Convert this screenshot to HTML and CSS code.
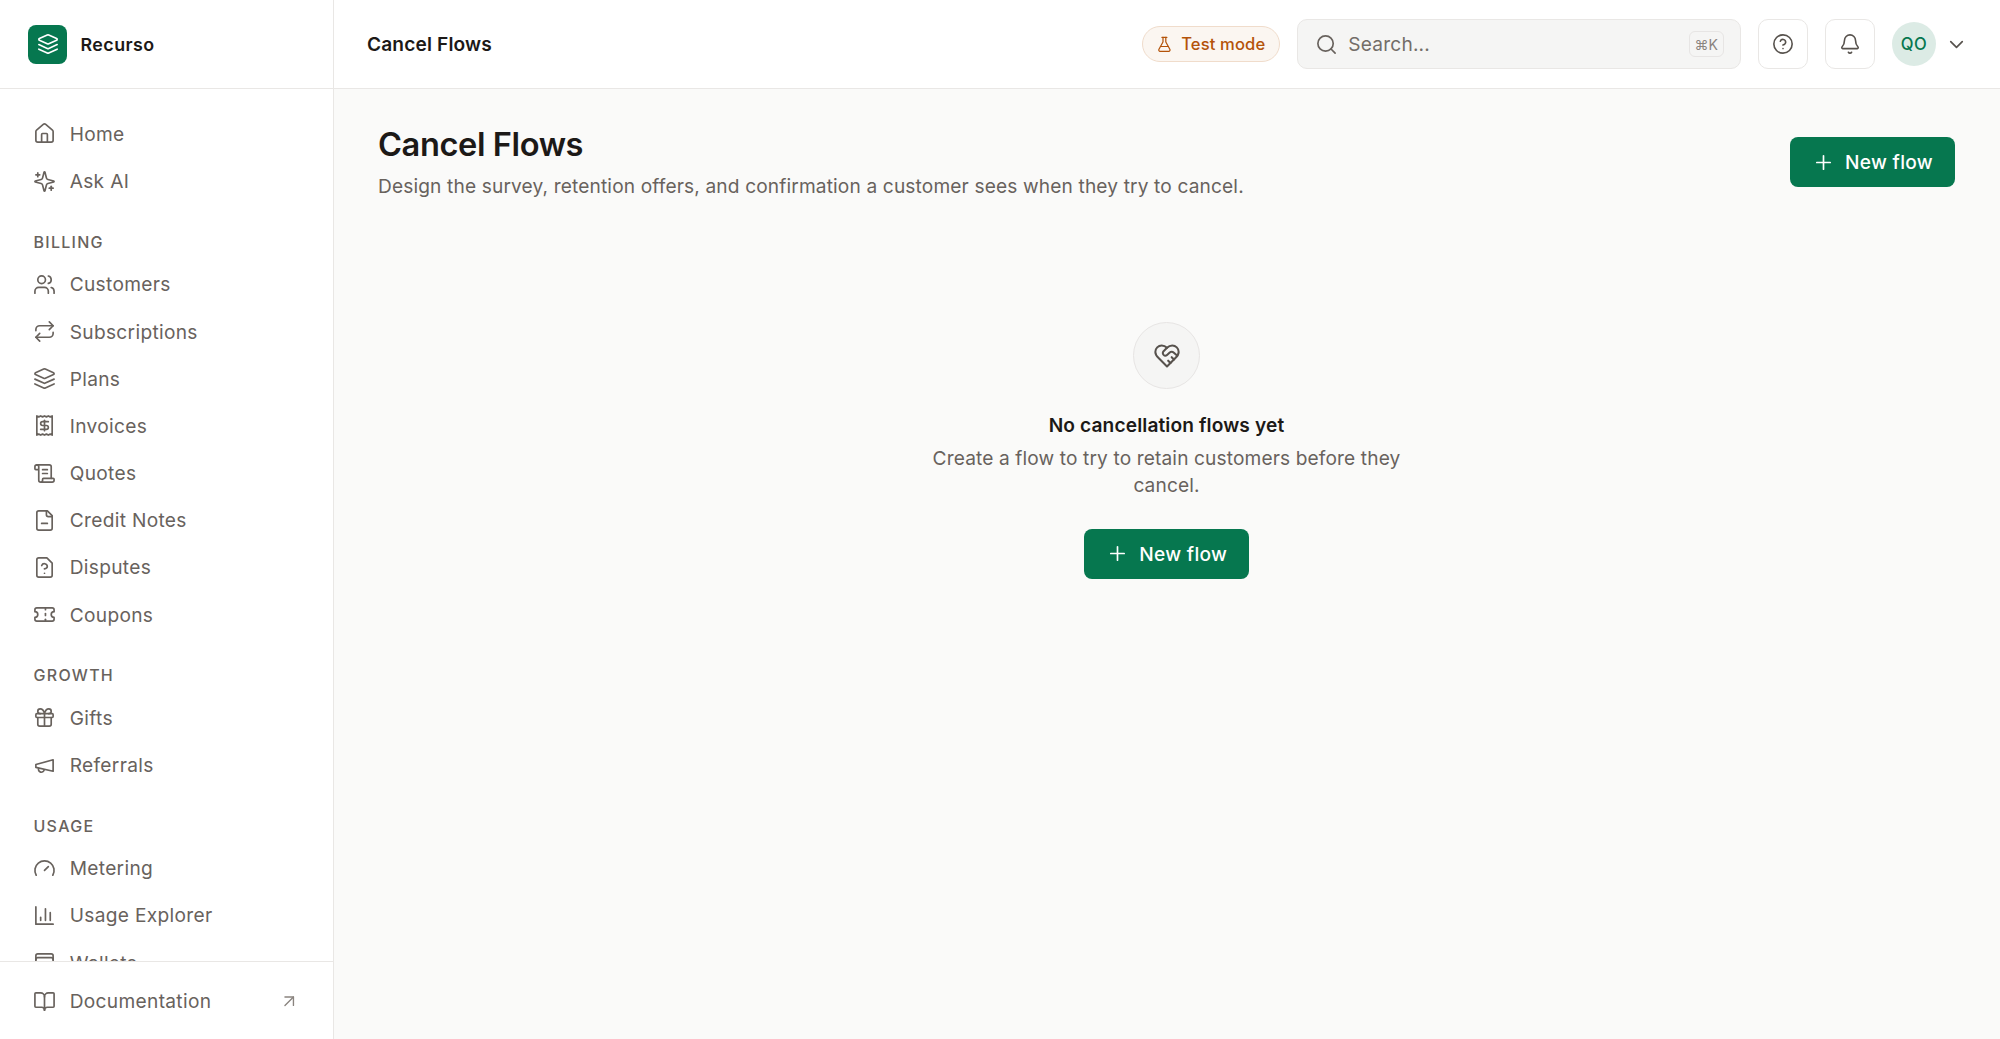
FILE: index.html
```html
<!DOCTYPE html>
<html lang="en">
<head>
<meta charset="utf-8">
<title>Cancel Flows</title>
<link rel="stylesheet" href="styles.css">
</head>
<body>
<div class="app">
  <aside class="sidebar">
    <div class="brand">
      <span class="logo"><svg class="ic logo-ic" viewBox="0 0 24 24"><path d="m12.83 2.18a2 2 0 0 0-1.66 0L2.6 6.08a1 1 0 0 0 0 1.83l8.58 3.91a2 2 0 0 0 1.66 0l8.58-3.9a1 1 0 0 0 0-1.83Z"/><path d="m22 17.65-9.17 4.16a2 2 0 0 1-1.66 0L2 17.65"/><path d="m22 12.65-9.17 4.16a2 2 0 0 1-1.66 0L2 12.65"/></svg></span>
      <span class="brand-name">Recurso</span>
    </div>
    <nav class="nav">
      <a class="item"><svg class="ic" viewBox="0 0 24 24"><path d="M15 21v-8a1 1 0 0 0-1-1h-4a1 1 0 0 0-1 1v8"/><path d="M3 10a2 2 0 0 1 .709-1.528l7-5.999a2 2 0 0 1 2.582 0l7 5.999A2 2 0 0 1 21 10v9a2 2 0 0 1-2 2H5a2 2 0 0 1-2-2z"/></svg>Home</a>
      <a class="item"><svg class="ic" viewBox="0 0 24 24"><path d="M9.937 15.5A2 2 0 0 0 8.5 14.063l-6.135-1.582a.5.5 0 0 1 0-.962L8.5 9.936A2 2 0 0 0 9.937 8.5l1.582-6.135a.5.5 0 0 1 .963 0L14.063 8.5A2 2 0 0 0 15.5 9.937l6.135 1.581a.5.5 0 0 1 0 .964L15.5 14.063a2 2 0 0 0-1.437 1.437l-1.582 6.135a.5.5 0 0 1-.963 0z"/><path d="M5 3v4"/><path d="M3 5h4"/><path d="M19 17v4"/><path d="M17 19h4"/></svg>Ask AI</a>

      <div class="label">BILLING</div>
      <a class="item"><svg class="ic" viewBox="0 0 24 24"><path d="M16 21v-2a4 4 0 0 0-4-4H6a4 4 0 0 0-4 4v2"/><circle cx="9" cy="7" r="4"/><path d="M22 21v-2a4 4 0 0 0-3-3.87"/><path d="M16 3.13a4 4 0 0 1 0 7.75"/></svg>Customers</a>
      <a class="item"><svg class="ic" viewBox="0 0 24 24"><path d="m17 2 4 4-4 4"/><path d="M3 11v-1a4 4 0 0 1 4-4h14"/><path d="m7 22-4-4 4-4"/><path d="M21 13v1a4 4 0 0 1-4 4H3"/></svg>Subscriptions</a>
      <a class="item"><svg class="ic" viewBox="0 0 24 24"><path d="m12.83 2.18a2 2 0 0 0-1.66 0L2.6 6.08a1 1 0 0 0 0 1.83l8.58 3.91a2 2 0 0 0 1.66 0l8.58-3.9a1 1 0 0 0 0-1.83Z"/><path d="m22 17.65-9.17 4.16a2 2 0 0 1-1.66 0L2 17.65"/><path d="m22 12.65-9.17 4.16a2 2 0 0 1-1.66 0L2 12.65"/></svg>Plans</a>
      <a class="item"><svg class="ic" viewBox="0 0 24 24"><path d="M4 2v20l2-1 2 1 2-1 2 1 2-1 2 1 2-1 2 1V2l-2 1-2-1-2 1-2-1-2 1-2-1-2 1Z"/><path d="M16 8h-6a2 2 0 1 0 0 4h4a2 2 0 1 1 0 4H8"/><path d="M12 17.5v-11"/></svg>Invoices</a>
      <a class="item"><svg class="ic" viewBox="0 0 24 24"><path d="M15 12h-5"/><path d="M15 8h-5"/><path d="M19 17V5a2 2 0 0 0-2-2H4"/><path d="M8 21h12a2 2 0 0 0 2-2v-1a1 1 0 0 0-1-1H11a1 1 0 0 0-1 1v1a2 2 0 1 1-4 0V5a2 2 0 1 0-4 0v2a1 1 0 0 0 1 1h3"/></svg>Quotes</a>
      <a class="item"><svg class="ic" viewBox="0 0 24 24"><path d="M15 2H6a2 2 0 0 0-2 2v16a2 2 0 0 0 2 2h12a2 2 0 0 0 2-2V7Z"/><path d="M14 2v4a2 2 0 0 0 2 2h4"/><path d="M9 15h6"/></svg>Credit Notes</a>
      <a class="item"><svg class="ic" viewBox="0 0 24 24"><path d="M14.5 2H6a2 2 0 0 0-2 2v16a2 2 0 0 0 2 2h12a2 2 0 0 0 2-2V7.5L14.5 2z"/><path d="M9.1 10a3 3 0 0 1 5.82 1c0 2-3 2.5-3 2.5"/><path d="M12 18h.01"/></svg>Disputes</a>
      <a class="item"><svg class="ic" viewBox="0 0 24 24"><path d="M2 9a3 3 0 0 1 0 6v2a2 2 0 0 0 2 2h16a2 2 0 0 0 2-2v-2a3 3 0 0 1 0-6V7a2 2 0 0 0-2-2H4a2 2 0 0 0-2 2Z"/><path d="M13 5v2"/><path d="M13 17v2"/><path d="M13 11v2"/></svg>Coupons</a>

      <div class="label">GROWTH</div>
      <a class="item"><svg class="ic" viewBox="0 0 24 24"><rect x="3" y="8" width="18" height="4" rx="1"/><path d="M12 8v13"/><path d="M19 12v7a2 2 0 0 1-2 2H7a2 2 0 0 1-2-2v-7"/><path d="M7.5 8a2.5 2.5 0 0 1 0-5A4.8 8 0 0 1 12 8a4.8 8 0 0 1 4.5-5 2.5 2.5 0 0 1 0 5"/></svg>Gifts</a>
      <a class="item"><svg class="ic" viewBox="0 0 24 24"><path d="m3 11 18-5v12L3 14v-3z"/><path d="M11.6 16.8a3 3 0 1 1-5.8-1.6"/></svg>Referrals</a>

      <div class="label">USAGE</div>
      <a class="item"><svg class="ic" viewBox="0 0 24 24"><path d="m12 14 4-4"/><path d="M3.34 19a10 10 0 1 1 17.32 0"/></svg>Metering</a>
      <a class="item"><svg class="ic" viewBox="0 0 24 24"><path d="M3 3v18h18"/><path d="M8 17v-3"/><path d="M13 17V5"/><path d="M18 17V9"/></svg>Usage Explorer</a>
      <a class="item"><svg class="ic" viewBox="0 0 24 24"><rect x="3" y="3" width="18" height="18" rx="2"/><path d="M3 9a2 2 0 0 1 2-2h14a2 2 0 0 1 2 2"/><path d="M3 11h3c.8 0 1.6.3 2.1.9l1.1.9c1.6 1.6 4.1 1.6 5.7 0l1.1-.9c.5-.5 1.3-.9 2.1-.9H21"/></svg>Wallets</a>
    </nav>
    <div class="side-foot">
      <a class="item doc"><svg class="ic" viewBox="0 0 24 24"><path d="M12 7v14"/><path d="M3 18a1 1 0 0 1-1-1V4a1 1 0 0 1 1-1h5a4 4 0 0 1 4 4 4 4 0 0 1 4-4h5a1 1 0 0 1 1 1v13a1 1 0 0 1-1 1h-6a3 3 0 0 0-3 3 3 3 0 0 0-3-3z"/></svg><span class="doc-text">Documentation</span><svg class="ic ext" viewBox="0 0 24 24"><path d="M7 7h10v10"/><path d="M7 17 17 7"/></svg></a>
    </div>
  </aside>

  <div class="content">
    <header class="topbar">
      <div class="top-title">Cancel Flows</div>
      <div class="top-right">
        <span class="pill"><svg class="ic pill-ic" viewBox="0 0 24 24"><path d="M14 2v6a2 2 0 0 0 .245.96l5.51 10.08A2 2 0 0 1 18 22H6a2 2 0 0 1-1.755-2.96l5.51-10.08A2 2 0 0 0 10 8V2"/><path d="M6.453 15h11.094"/><path d="M8.5 2h7"/></svg>Test mode</span>
        <div class="search"><svg class="ic search-ic" viewBox="0 0 24 24"><circle cx="11" cy="11" r="8"/><path d="m21 21-4.3-4.3"/></svg><span class="search-text">Search...</span><kbd class="kbd">⌘K</kbd></div>
        <button class="icon-btn"><svg class="ic" viewBox="0 0 24 24"><circle cx="12" cy="12" r="10"/><path d="M9.09 9a3 3 0 0 1 5.83 1c0 2-3 3-3 3"/><path d="M12 17h.01"/></svg></button>
        <button class="icon-btn"><svg class="ic" viewBox="0 0 24 24"><path d="M10.268 21a2 2 0 0 0 3.464 0"/><path d="M3.262 15.326A1 1 0 0 0 4 17h16a1 1 0 0 0 .74-1.673C19.41 13.956 18 12.499 18 8A6 6 0 0 0 6 8c0 4.499-1.411 5.956-2.738 7.326"/></svg></button>
        <div class="user"><span class="avatar">QO</span><svg class="ic chev" viewBox="0 0 24 24"><path d="m6 9 6 6 6-6"/></svg></div>
      </div>
    </header>
    <main class="main">
      <div class="page-head">
        <div>
          <h1 class="h1">Cancel Flows</h1>
          <p class="sub">Design the survey, retention offers, and confirmation a customer sees when they try to cancel.</p>
        </div>
        <button class="btn"><svg class="ic" viewBox="0 0 24 24"><path d="M5 12h14"/><path d="M12 5v14"/></svg>New flow</button>
      </div>
      <section class="empty">
        <div class="empty-ic"><svg class="ic" viewBox="0 0 24 24"><path d="M19 14c1.49-1.46 3-3.21 3-5.5A5.5 5.5 0 0 0 16.5 3c-1.76 0-3 .5-4.5 2-1.5-1.5-2.74-2-4.5-2A5.5 5.5 0 0 0 2 8.5c0 2.3 1.5 4.05 3 5.5l7 7Z"/><path d="M12 5 9.04 7.96a2.17 2.17 0 0 0 0 3.08c.82.82 2.13.85 3 .07l2.07-1.9a2.82 2.82 0 0 1 3.79 0l2.96 2.66"/><path d="m18 15-2-2"/><path d="m15 18-2-2"/></svg></div>
        <h2 class="empty-title">No cancellation flows yet</h2>
        <p class="empty-desc">Create a flow to try to retain customers before they cancel.</p>
        <button class="btn"><svg class="ic" viewBox="0 0 24 24"><path d="M5 12h14"/><path d="M12 5v14"/></svg>New flow</button>
      </section>
    </main>
  </div>
</div>
</body>
</html>
```
FILE: styles.css
```css
* { box-sizing: border-box; }
html, body { margin: 0; height: 100%; }
body {
  font-family: Inter, "Liberation Sans", sans-serif;
  color: #1c1917;
  background: #fafaf9;
  overflow: hidden;
}
.app { display: flex; height: 1039px; }
.ic {
  width: 23px; height: 23px; flex: none;
  fill: none; stroke: currentColor; stroke-width: 1.75;
  stroke-linecap: round; stroke-linejoin: round;
}

.sidebar {
  width: 334px; flex: none;
  display: flex; flex-direction: column;
  background: #fff;
  border-right: 1.5px solid #e9e7e5;
}
.brand {
  height: 89px; flex: none;
  display: flex; align-items: center; gap: 13.5px;
  padding-left: 28px;
  border-bottom: 1.5px solid #e9e7e5;
}
.logo {
  width: 39px; height: 39px; border-radius: 8px;
  background: #06774f; color: #fff;
  display: flex; align-items: center; justify-content: center;
}
.logo-ic { width: 22px; height: 22px; }
.brand-name { font-size: 17.85px; font-weight: 600; letter-spacing: 0.45px; color: #1c1917; }
.nav {
  flex: 1; min-height: 0; overflow: hidden;
  padding-top: 21.4px;
}
.item {
  display: flex; align-items: center; gap: 13.3px;
  height: 47.2px; padding-left: 33.4px;
  font-size: 19.13px; letter-spacing: 0.33px; color: #68625d;
}
.label {
  margin: 23.2px 0 4.8px;
  height: 28px; line-height: 28px;
  padding-left: 33.5px;
  font-size: 16px; font-weight: 500; letter-spacing: 0.08em;
  color: #68625d;
}
.side-foot {
  flex: none; height: 78.5px;
  padding-top: 16px;
  border-top: 1.5px solid #e9e7e5;
}
.doc { padding-right: 34px; }
.doc-text { flex: 1; }
.ext { width: 20.4px; height: 20.4px; color: #8a847f; stroke-width: 1.6; }

.content { flex: 1; min-width: 0; display: flex; flex-direction: column; }
.topbar {
  height: 89px; flex: none;
  display: flex; align-items: center; justify-content: space-between;
  padding: 0 32.5px 0 33px;
  background: #fff;
  border-bottom: 1.5px solid #e9e7e5;
}
.top-title { font-size: 19.13px; font-weight: 600; letter-spacing: 0.15px; color: #1c1917; }
.top-right { display: flex; align-items: center; gap: 17px; }
.pill {
  display: flex; align-items: center; justify-content: center; gap: 8px;
  width: 138px; height: 36px;
  border: 1.5px solid #f0dccb; border-radius: 18px;
  background: #fbf6f1; color: #b45309;
  font-size: 16.6px; font-weight: 500; letter-spacing: 0.12px;
}
.pill-ic { width: 16.8px; height: 16.8px; }
.search {
  display: flex; align-items: center; gap: 10.7px;
  width: 444px; height: 49.5px;
  padding: 0 16px 0 16.8px;
  background: #f5f5f4;
  border: 1.5px solid #e9e7e5; border-radius: 10px;
  color: #68625d;
}
.search-text { flex: 1; font-size: 19.13px; letter-spacing: 0.2px; color: #736d68; }
.kbd {
  display: flex; align-items: center; justify-content: center;
  width: 35px; height: 26px;
  border: 1.5px solid #e7e5e4; border-radius: 6px;
  background: #f5f5f4;
  font-family: Inter, "DejaVu Sans", sans-serif;
  font-size: 14px; color: #8a847f;
}
.icon-btn {
  width: 50px; height: 49.5px; padding: 0;
  display: flex; align-items: center; justify-content: center;
  background: #fff;
  border: 1.5px solid #e9e7e5; border-radius: 10px;
  color: #57524d;
}
.icon-btn .ic { width: 22px; height: 22px; }
.user { display: flex; align-items: center; gap: 8.2px; }
.avatar {
  width: 44.5px; height: 44.5px; border-radius: 50%;
  background: #dcebe5; color: #06774f;
  display: flex; align-items: center; justify-content: center;
  font-size: 16.6px; font-weight: 500; letter-spacing: 0.03em;
}
.chev { color: #57524d; }

.main { flex: 1; min-height: 0; padding: 35px 45px 0 44px; }
.page-head { display: flex; align-items: center; justify-content: space-between; }
.h1 { margin: 0; font-size: 32.6px; line-height: 40px; font-weight: 600; color: #1c1917; letter-spacing: -0.4px; }
.sub { margin: 8px 0 0; font-size: 19.13px; line-height: 28px; letter-spacing: 0.148px; color: #68625d; }
.btn {
  display: inline-flex; align-items: center; gap: 10.5px;
  height: 50px; padding: 0 22px;
  background: #06774f; color: #fff;
  border: 0; border-radius: 8px;
  font-family: inherit; font-size: 19.13px; font-weight: 500; letter-spacing: 0.32px;
}
.empty {
  margin-top: 122px;
  display: flex; flex-direction: column; align-items: center;
  text-align: center;
}
.empty-ic {
  width: 67px; height: 67px; border-radius: 50%;
  background: #f5f5f4; border: 1.5px solid #e7e5e4;
  display: flex; align-items: center; justify-content: center;
  color: #57524d;
}
.empty-ic .ic { width: 28px; height: 28px; }
.empty-title { margin: 21.5px 0 0; font-size: 19.13px; line-height: 28px; font-weight: 600; letter-spacing: 0.13px; color: #1c1917; }
.empty-desc { margin: 6px 0 29px; width: 510px; font-size: 19.13px; line-height: 27.5px; letter-spacing: 0.13px; color: #68625d; }
```
